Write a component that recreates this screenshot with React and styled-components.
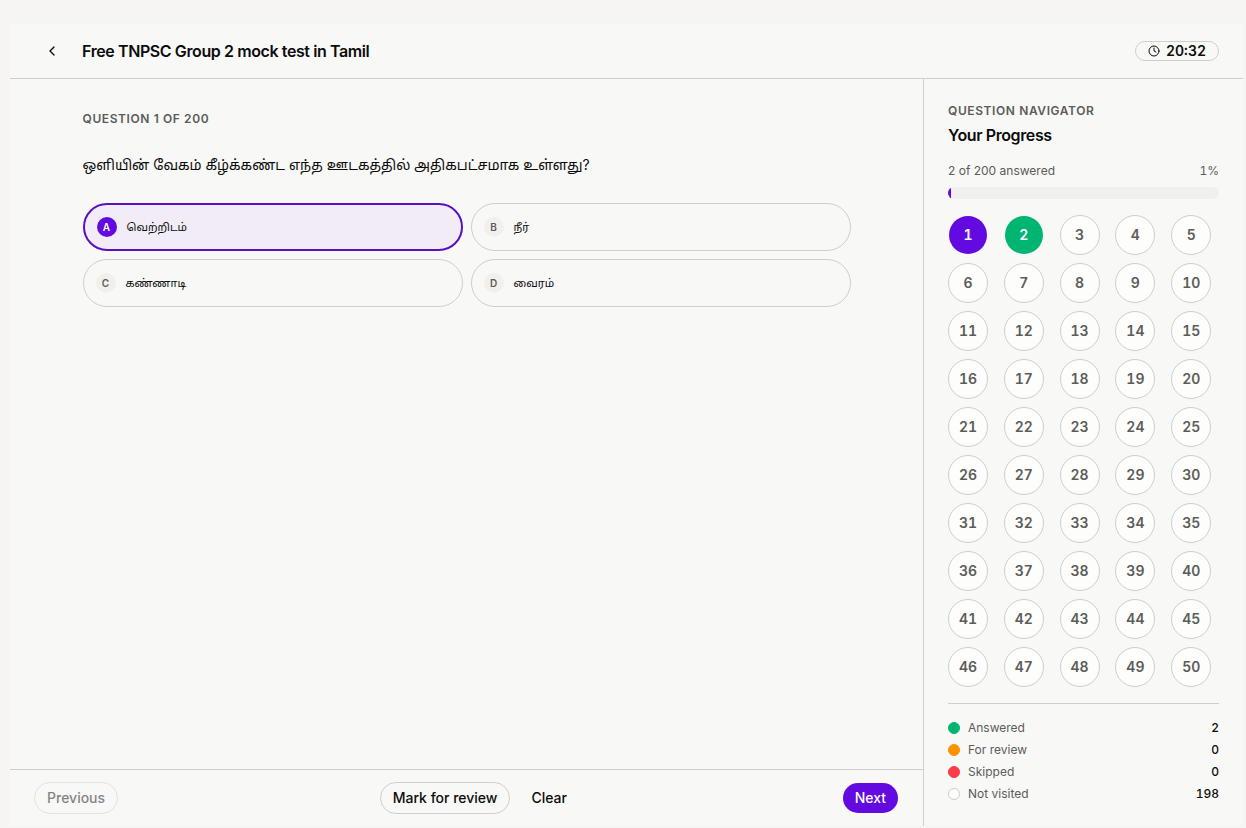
import React, { useState } from 'react';
import styled, { createGlobalStyle } from 'styled-components';
import { ChevronLeft, Clock } from 'lucide-react';

const GlobalStyle = createGlobalStyle`
  *, *::before, *::after {
    box-sizing: border-box;
  }
  body {
    margin: 0;
    background-color: #f6f5f3;
    color: #0c0c0c;
    font-family: Inter, "Noto Sans Tamil", "Noto Sans", sans-serif;
    font-size: 14px;
    line-height: 20px;
  }
  button {
    font: inherit;
    color: inherit;
    cursor: pointer;
  }
  h1, h2, p, dl, dd {
    margin: 0;
    padding: 0;
  }
`;

const Page = styled.div`
  display: flex;
  flex-direction: column;
  min-height: 100vh;
  padding: 24px 3px 2px 10px;
`;

const Shell = styled.div`
  flex: 1;
  display: flex;
  flex-direction: column;
  background-color: #f8f8f6;
`;

const Header = styled.header`
  display: flex;
  align-items: center;
  gap: 12px;
  height: 55px;
  padding: 0 24px;
  border-bottom: 1px solid #cfcfcd;
`;

const BackButton = styled.button`
  display: flex;
  align-items: center;
  justify-content: center;
  width: 36px;
  height: 36px;
  padding: 0;
  border: none;
  border-radius: 18px;
  background: none;
`;

const Title = styled.h1`
  flex: 1;
  font-size: 16px;
  font-weight: 600;
  line-height: 24px;
  letter-spacing: -0.025em;
`;

const Timer = styled.div`
  display: flex;
  align-items: center;
  gap: 6px;
  height: 20px;
  padding: 0 12px;
  border: 1px solid #cfcfcd;
  border-radius: 10px;
  font-weight: 600;
  font-variant-numeric: tabular-nums;
`;

const Body = styled.div`
  flex: 1;
  display: flex;
`;

const Main = styled.main`
  flex: 1;
  display: flex;
  flex-direction: column;
  min-width: 0;
`;

const Question = styled.section`
  flex: 1;
  width: 100%;
  max-width: 768px;
  margin: 0 auto;
  padding-top: 32px;
`;

const Eyebrow = styled.p`
  color: #5c5c59;
  font-size: 12px;
  font-weight: 600;
  line-height: 16px;
  letter-spacing: 0.05em;
  text-transform: uppercase;
`;

const QuestionText = styled.h2`
  margin-top: 24px;
  font-size: 14px;
  font-weight: 400;
  line-height: 28px;
`;

const Options = styled.div`
  display: grid;
  grid-template-columns: 1fr 1fr;
  gap: 8px;
  margin-top: 24px;
`;

const Option = styled.button`
  display: flex;
  align-items: center;
  gap: 10px;
  height: 48px;
  padding: 0 12px;
  border: ${props => (props.$selected ? '2px solid #5b0fc4' : '1px solid #cfcfcd')};
  border-radius: 24px;
  background-color: ${props => (props.$selected ? '#f2ecf6' : 'transparent')};
  font-size: 11px;
  text-align: left;
`;

const OptionLetter = styled.span`
  display: flex;
  align-items: center;
  justify-content: center;
  width: 20px;
  height: 20px;
  border-radius: 50%;
  background-color: ${props => (props.$selected ? '#630ae0' : '#f1f0ec')};
  color: ${props => (props.$selected ? 'white' : '#5c5c59')};
  font-size: 10px;
  font-weight: 600;
`;

const Footer = styled.footer`
  display: flex;
  align-items: center;
  justify-content: space-between;
  padding: 12px 24px;
  border-top: 1px solid #cfcfcd;
`;

const Actions = styled.div`
  display: flex;
  gap: 8px;
`;

const variants = {
  outline: 'border-color: #cfcfcd;',
  ghost: '',
  primary: 'background-color: #630ae0; color: white;',
};

const Button = styled.button`
  height: 32px;
  padding: 0 12px;
  border: 1px solid transparent;
  border-radius: 16px;
  background: none;
  background-clip: padding-box;
  font-weight: 500;
  ${props => variants[props.$variant]}

  &:disabled {
    opacity: 0.5;
    cursor: default;
  }
`;

const Sidebar = styled.aside`
  width: 320px;
  padding: 24px;
  border-left: 1px solid #cfcfcd;
`;

const SidebarTitle = styled(Title).attrs({ as: 'h2' })`
  margin-top: 4px;
`;

const ProgressText = styled.div`
  display: flex;
  justify-content: space-between;
  margin-top: 16px;
  color: #5c5c59;
  font-size: 12px;
  line-height: 16px;
`;

const Percent = styled.span`
  font-variant-numeric: tabular-nums;
`;

const ProgressTrack = styled.div`
  height: 12px;
  margin-top: 8px;
  border-radius: 6px;
  background-color: #f1f0ec;
  overflow: hidden;
`;

const ProgressFill = styled.div`
  height: 100%;
  background-color: #630ae0;
`;

const NumberGrid = styled.div`
  display: grid;
  grid-template-columns: repeat(5, 1fr);
  gap: 8px;
  margin-top: 16px;
`;

const numberColors = {
  current: 'background-color: #630ae0; border-color: transparent; color: white;',
  answered: 'background-color: #00b572; border-color: transparent; color: white;',
};

const NumberButton = styled.button`
  width: 40px;
  height: 40px;
  padding: 0;
  border: 1px solid #cfcfcd;
  border-radius: 50%;
  background-color: #fdfdfb;
  background-clip: padding-box;
  color: #5c5c59;
  font-weight: 600;
  font-variant-numeric: tabular-nums;
  ${props => numberColors[props.$status]}
`;

const Legend = styled.dl`
  display: flex;
  flex-direction: column;
  gap: 6px;
  margin-top: 16px;
  padding-top: 16px;
  border-top: 1px solid #cfcfcd;
  font-size: 12px;
  line-height: 16px;
`;

const LegendRow = styled.div`
  display: flex;
  align-items: center;
  justify-content: space-between;
`;

const LegendLabel = styled.dt`
  display: flex;
  align-items: center;
  gap: 8px;
  color: #5c5c59;
`;

const Dot = styled.span`
  width: 12px;
  height: 12px;
  border: 1px solid ${props => props.$border || props.$color};
  border-radius: 50%;
  background-color: ${props => props.$color};
`;

const LegendValue = styled.dd`
  font-weight: 500;
  font-variant-numeric: tabular-nums;
`;

const options = [
  { letter: 'A', text: 'வெற்றிடம்' },
  { letter: 'B', text: 'நீர்' },
  { letter: 'C', text: 'கண்ணாடி' },
  { letter: 'D', text: 'வைரம்' },
];

const legend = [
  { label: 'Answered', value: 2, color: '#00b572' },
  { label: 'For review', value: 0, color: '#ff9200' },
  { label: 'Skipped', value: 0, color: '#fb3b47' },
  { label: 'Not visited', value: 198, color: '#fdfdfb', border: '#cfcfcd' },
];

const numbers = Array.from({ length: 50 }, (_, i) => i + 1);
const total = 200;
const answered = 2;

const getStatus = (number, current) => {
  if (number === current) return 'current';
  return number <= answered ? 'answered' : 'empty';
};

export default function App() {
  const [selected, setSelected] = useState('A');
  const [current, setCurrent] = useState(1);
  const percent = (answered / total) * 100;

  return (
    <>
      <GlobalStyle />
      <Page>
        <Shell>
          <Header>
            <BackButton type="button" aria-label="Back">
              <ChevronLeft size={16} />
            </BackButton>
            <Title>Free TNPSC Group 2 mock test in Tamil</Title>
            <Timer>
              <Clock size={12} />
              20:32
            </Timer>
          </Header>
          <Body>
            <Main>
              <Question>
                <Eyebrow>Question {current} of {total}</Eyebrow>
                <QuestionText lang="ta">
                  ஒளியின் வேகம் கீழ்க்கண்ட எந்த ஊடகத்தில் அதிகபட்சமாக உள்ளது?
                </QuestionText>
                <Options>
                  {options.map(({ letter, text }) => (
                    <Option
                      key={letter}
                      type="button"
                      aria-pressed={selected === letter}
                      $selected={selected === letter}
                      onClick={() => setSelected(letter)}
                    >
                      <OptionLetter $selected={selected === letter}>{letter}</OptionLetter>
                      <span lang="ta">{text}</span>
                    </Option>
                  ))}
                </Options>
              </Question>
              <Footer>
                <Button
                  type="button"
                  $variant="outline"
                  disabled={current === 1}
                  onClick={() => setCurrent(current - 1)}
                >
                  Previous
                </Button>
                <Actions>
                  <Button type="button" $variant="outline">Mark for review</Button>
                  <Button type="button" $variant="ghost" onClick={() => setSelected(null)}>
                    Clear
                  </Button>
                </Actions>
                <Button type="button" $variant="primary" onClick={() => setCurrent(current + 1)}>
                  Next
                </Button>
              </Footer>
            </Main>
            <Sidebar>
              <Eyebrow>Question Navigator</Eyebrow>
              <SidebarTitle>Your Progress</SidebarTitle>
              <ProgressText>
                <span>{answered} of {total} answered</span>
                <Percent>{percent}%</Percent>
              </ProgressText>
              <ProgressTrack>
                <ProgressFill style={{ width: `${percent}%` }} />
              </ProgressTrack>
              <NumberGrid>
                {numbers.map(number => (
                  <NumberButton
                    key={number}
                    type="button"
                    $status={getStatus(number, current)}
                    onClick={() => setCurrent(number)}
                  >
                    {number}
                  </NumberButton>
                ))}
              </NumberGrid>
              <Legend>
                {legend.map(({ label, value, color, border }) => (
                  <LegendRow key={label}>
                    <LegendLabel>
                      <Dot $color={color} $border={border} />
                      {label}
                    </LegendLabel>
                    <LegendValue>{value}</LegendValue>
                  </LegendRow>
                ))}
              </Legend>
            </Sidebar>
          </Body>
        </Shell>
      </Page>
    </>
  );
}
